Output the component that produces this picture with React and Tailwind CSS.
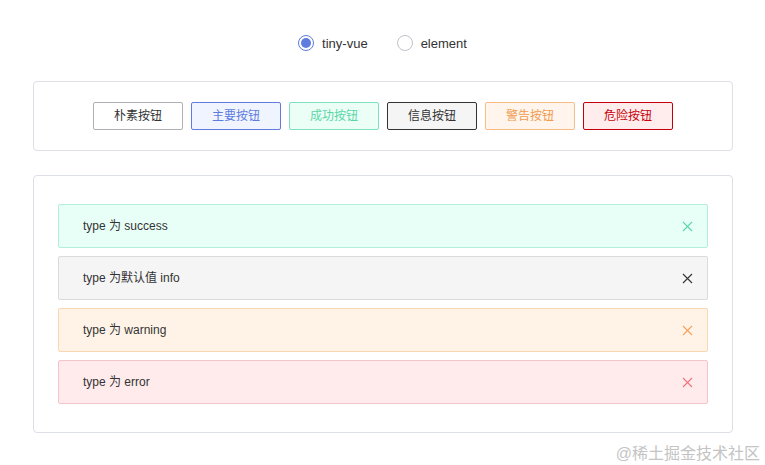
import React from "react";

const font = { fontFamily: '"Liberation Sans", "Noto Sans CJK SC", sans-serif' };

function X({ color }) {
  return (
    <svg width="11" height="11" viewBox="0 0 11 11" className="shrink-0">
      <path d="M1 1 L10 10 M10 1 L1 10" stroke={color} strokeWidth="1.1" fill="none" />
    </svg>
  );
}

const buttons = [
  { t: "朴素按钮", c: "border-[#adb0b8] bg-white text-[#333333]" },
  { t: "主要按钮", c: "border-[#5e7ce0] bg-[#f0f4ff] text-[#5e7ce0]" },
  { t: "成功按钮", c: "border-[#7ee0bd] bg-[#ebfff7] text-[#5cd6a8]" },
  { t: "信息按钮", c: "border-[#333333] bg-[#f5f5f5] text-[#333333]" },
  { t: "警告按钮", c: "border-[#f8bc84] bg-[#fff5ec] text-[#f29b4f]" },
  { t: "危险按钮", c: "border-[#c7000b] bg-[#ffeded] text-[#c7000b]" },
];

const alerts = [
  { t: "type 为 success", c: "border-[#b3eed9] bg-[#e8fff7]", x: "#5cd6a8" },
  { t: "type 为默认值 info", c: "border-[#dbdbdb] bg-[#f5f5f5]", x: "#333333" },
  { t: "type 为 warning", c: "border-[#fad6b1] bg-[#fff3e8]", x: "#f5a05a" },
  { t: "type 为 error", c: "border-[#f5c6c9] bg-[#ffebec]", x: "#f0727c" },
];

export default function App() {
  return (
    <div className="w-[765px] h-[465px] bg-white relative overflow-hidden text-[#333333]" style={font}>
      <div className="flex justify-center items-center gap-[29px] pt-[34px] h-[52px]">
        <div className="flex items-center gap-[8px]">
          <span className="w-[16px] h-[16px] rounded-full border border-[#5e7ce0] flex items-center justify-center">
            <span className="w-[10px] h-[10px] rounded-full bg-[#5e7ce0]" />
          </span>
          <span className="text-[13px] leading-none">tiny-vue</span>
        </div>
        <div className="flex items-center gap-[8px]">
          <span className="w-[16px] h-[16px] rounded-full border border-[#bfc2c8] bg-white" />
          <span className="text-[13px] leading-none">element</span>
        </div>
      </div>

      <div className="ml-[33px] w-[700px] mt-[29px] h-[70px] border border-[#dcdfe6] rounded-[4px] flex items-center justify-center gap-[8px]">
        {buttons.map((b) => (
          <div
            key={b.t}
            className={`w-[90px] h-[28px] border rounded-[2px] flex items-center justify-center text-[12px] ${b.c}`}
          >
            {b.t}
          </div>
        ))}
      </div>

      <div className="ml-[33px] w-[700px] mt-[24px] h-[258px] border border-[#dcdfe6] rounded-[4px] px-[24px] pt-[28px] flex flex-col gap-[8px]">
        {alerts.map((a) => (
          <div
            key={a.t}
            className={`h-[44px] border rounded-[2px] flex items-center justify-between pl-[24px] pr-[14px] ${a.c}`}
          >
            <span className="text-[12px] text-[#333333]">{a.t}</span>
            <X color={a.x} />
          </div>
        ))}
      </div>

      <div className="absolute right-[5px] bottom-[3px] text-[16px] text-[#c4c4c4] leading-none">
        @稀土掘金技术社区
      </div>
    </div>
  );
}
